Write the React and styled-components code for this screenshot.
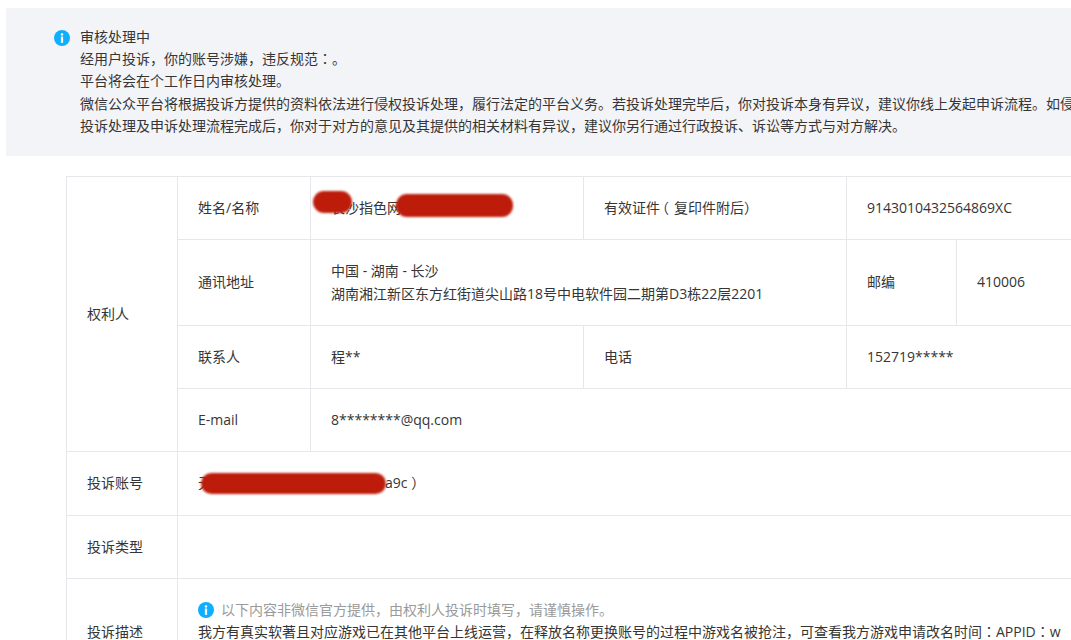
import React from "react";
import styled, { createGlobalStyle } from "styled-components";

const Global = createGlobalStyle`
html, body {
  margin: 0;
  padding: 0;
  background: #fff;
}
body {
  font-family: "Open Sans", "Noto Sans CJK SC", sans-serif;
  font-size: 14px;
  color: #353535;
}
`;

const Page = styled.div`
  width: 1071px;
  height: 640px;
  overflow: hidden;
  padding: 8px 0 0 6px;
  box-sizing: border-box;
`;

const Banner = styled.div`
  display: flex;
  width: 1200px;
  height: 148px;
  box-sizing: border-box;
  padding: 17.6px 0 0 48px;
  background: #f3f4f8;
  line-height: 22.4px;
`;

const BannerIcon = styled.div`
  flex: none;
  width: 16px;
  height: 16px;
  margin: 4px 10px 0 0;
`;

const BannerText = styled.div`
  white-space: nowrap;
`;

const Line = styled.div``;

// the centred full-width colon of the reference
const Colon = styled.span`
  font-family: "Noto Sans CJK TC", sans-serif;
  line-height: 0;
`;

const OpenParen = styled.span`
  display: inline-block;
  width: 14px;
  text-indent: -5px;
`;

const Table = styled.table`
  margin: 20px 0 0 60px;
  width: 1200px;
  table-layout: fixed;
  border-collapse: collapse;
`;

const Row = styled.tr`
  height: ${(props) => props.$h}px;
`;

const Cell = styled.td`
  position: relative;
  box-sizing: border-box;
  padding: 0 20px;
  border: 1px solid #e7e7eb;
  line-height: 22.4px;
  white-space: nowrap;
  vertical-align: middle;
`;

const TopCell = styled(Cell)`
  padding-top: 20px;
  vertical-align: top;
`;

const Notice = styled.div`
  display: flex;
  align-items: center;
  gap: 7px;
  color: #9a9a9a;
`;

const NoticeIcon = styled.div`
  flex: none;
  width: 16px;
  height: 16px;
`;

const Scribble = styled.div`
  position: absolute;
  left: ${(props) => props.$x}px;
  top: ${(props) => props.$y}px;
  width: ${(props) => props.$w}px;
  height: ${(props) => props.$h}px;
  border-radius: 11px;
  background: #bd1c0b;
  filter: blur(0.8px);
`;

const Hidden = styled.span`
  display: inline-block;
  width: ${(props) => props.$w}px;
`;

const InfoIcon = () => (
  <svg width="16" height="16" viewBox="0 0 16 16" style={{ display: "block" }}>
    <circle cx="8" cy="8" r="8" fill="#10aeff" />
    <circle cx="8" cy="4.4" r="1.2" fill="#fff" />
    <rect x="6.9" y="6.5" width="2.2" height="6.3" fill="#fff" />
  </svg>
);

export default function App() {
  return (
    <>
      <Global />
      <Page>
        <Banner>
          <BannerIcon>
            <InfoIcon />
          </BannerIcon>
          <BannerText>
            <Line>审核处理中</Line>
            <Line>
              经用户投诉，你的账号涉嫌，违反规范<Colon>：</Colon>。
            </Line>
            <Line>平台将会在个工作日内审核处理。</Line>
            <Line>
              微信公众平台将根据投诉方提供的资料依法进行侵权投诉处理，履行法定的平台义务。若投诉处理完毕后，你对投诉本身有异议，建议你线上发起申诉流程。如侵
            </Line>
            <Line>
              投诉处理及申诉处理流程完成后，你对于对方的意见及其提供的相关材料有异议，建议你另行通过行政投诉、诉讼等方式与对方解决。
            </Line>
          </BannerText>
        </Banner>
        <Table>
          <colgroup>
            <col width="111" />
            <col width="133" />
            <col width="273" />
            <col width="263" />
            <col width="110" />
            <col />
          </colgroup>
          <tbody>
            <Row $h={63}>
              <Cell rowSpan={4}>权利人</Cell>
              <Cell>姓名/名称</Cell>
              <Cell>
                长沙指色网
                <Scribble $x={2} $y={14} $w={39} $h={22} />
                <Scribble $x={85} $y={17} $w={117} $h={23} />
              </Cell>
              <Cell>
                有效证件<OpenParen>（</OpenParen>复印件附后）
              </Cell>
              <Cell colSpan={2}>9143010432564869XC</Cell>
            </Row>
            <Row $h={86}>
              <Cell>通讯地址</Cell>
              <Cell colSpan={2}>
                <Line>中国 - 湖南 - 长沙</Line>
                <Line>湖南湘江新区东方红街道尖山路18号中电软件园二期第D3栋22层2201</Line>
              </Cell>
              <Cell>邮编</Cell>
              <Cell>410006</Cell>
            </Row>
            <Row $h={63}>
              <Cell>联系人</Cell>
              <Cell>程**</Cell>
              <Cell>电话</Cell>
              <Cell colSpan={2}>152719*****</Cell>
            </Row>
            <Row $h={63}>
              <Cell>E-mail</Cell>
              <Cell colSpan={4}>8********@qq.com</Cell>
            </Row>
            <Row $h={64}>
              <Cell>投诉账号</Cell>
              <Cell colSpan={5}>
                无<Hidden $w={173} />a9c ）
                <Scribble $x={23} $y={21} $w={185} $h={21} />
              </Cell>
            </Row>
            <Row $h={63}>
              <Cell>投诉类型</Cell>
              <Cell colSpan={5} />
            </Row>
            <Row $h={108}>
              <Cell>投诉描述</Cell>
              <TopCell colSpan={5}>
                <Notice>
                  <NoticeIcon>
                    <InfoIcon />
                  </NoticeIcon>
                  以下内容非微信官方提供，由权利人投诉时填写，请谨慎操作。
                </Notice>
                <Line>
                  我方有真实软著且对应游戏已在其他平台上线运营，在释放名称更换账号的过程中游戏名被抢注，可查看我方游戏申请改名时间<Colon>：</Colon>APPID<Colon>：</Colon>w
                </Line>
              </TopCell>
            </Row>
          </tbody>
        </Table>
      </Page>
    </>
  );
}
